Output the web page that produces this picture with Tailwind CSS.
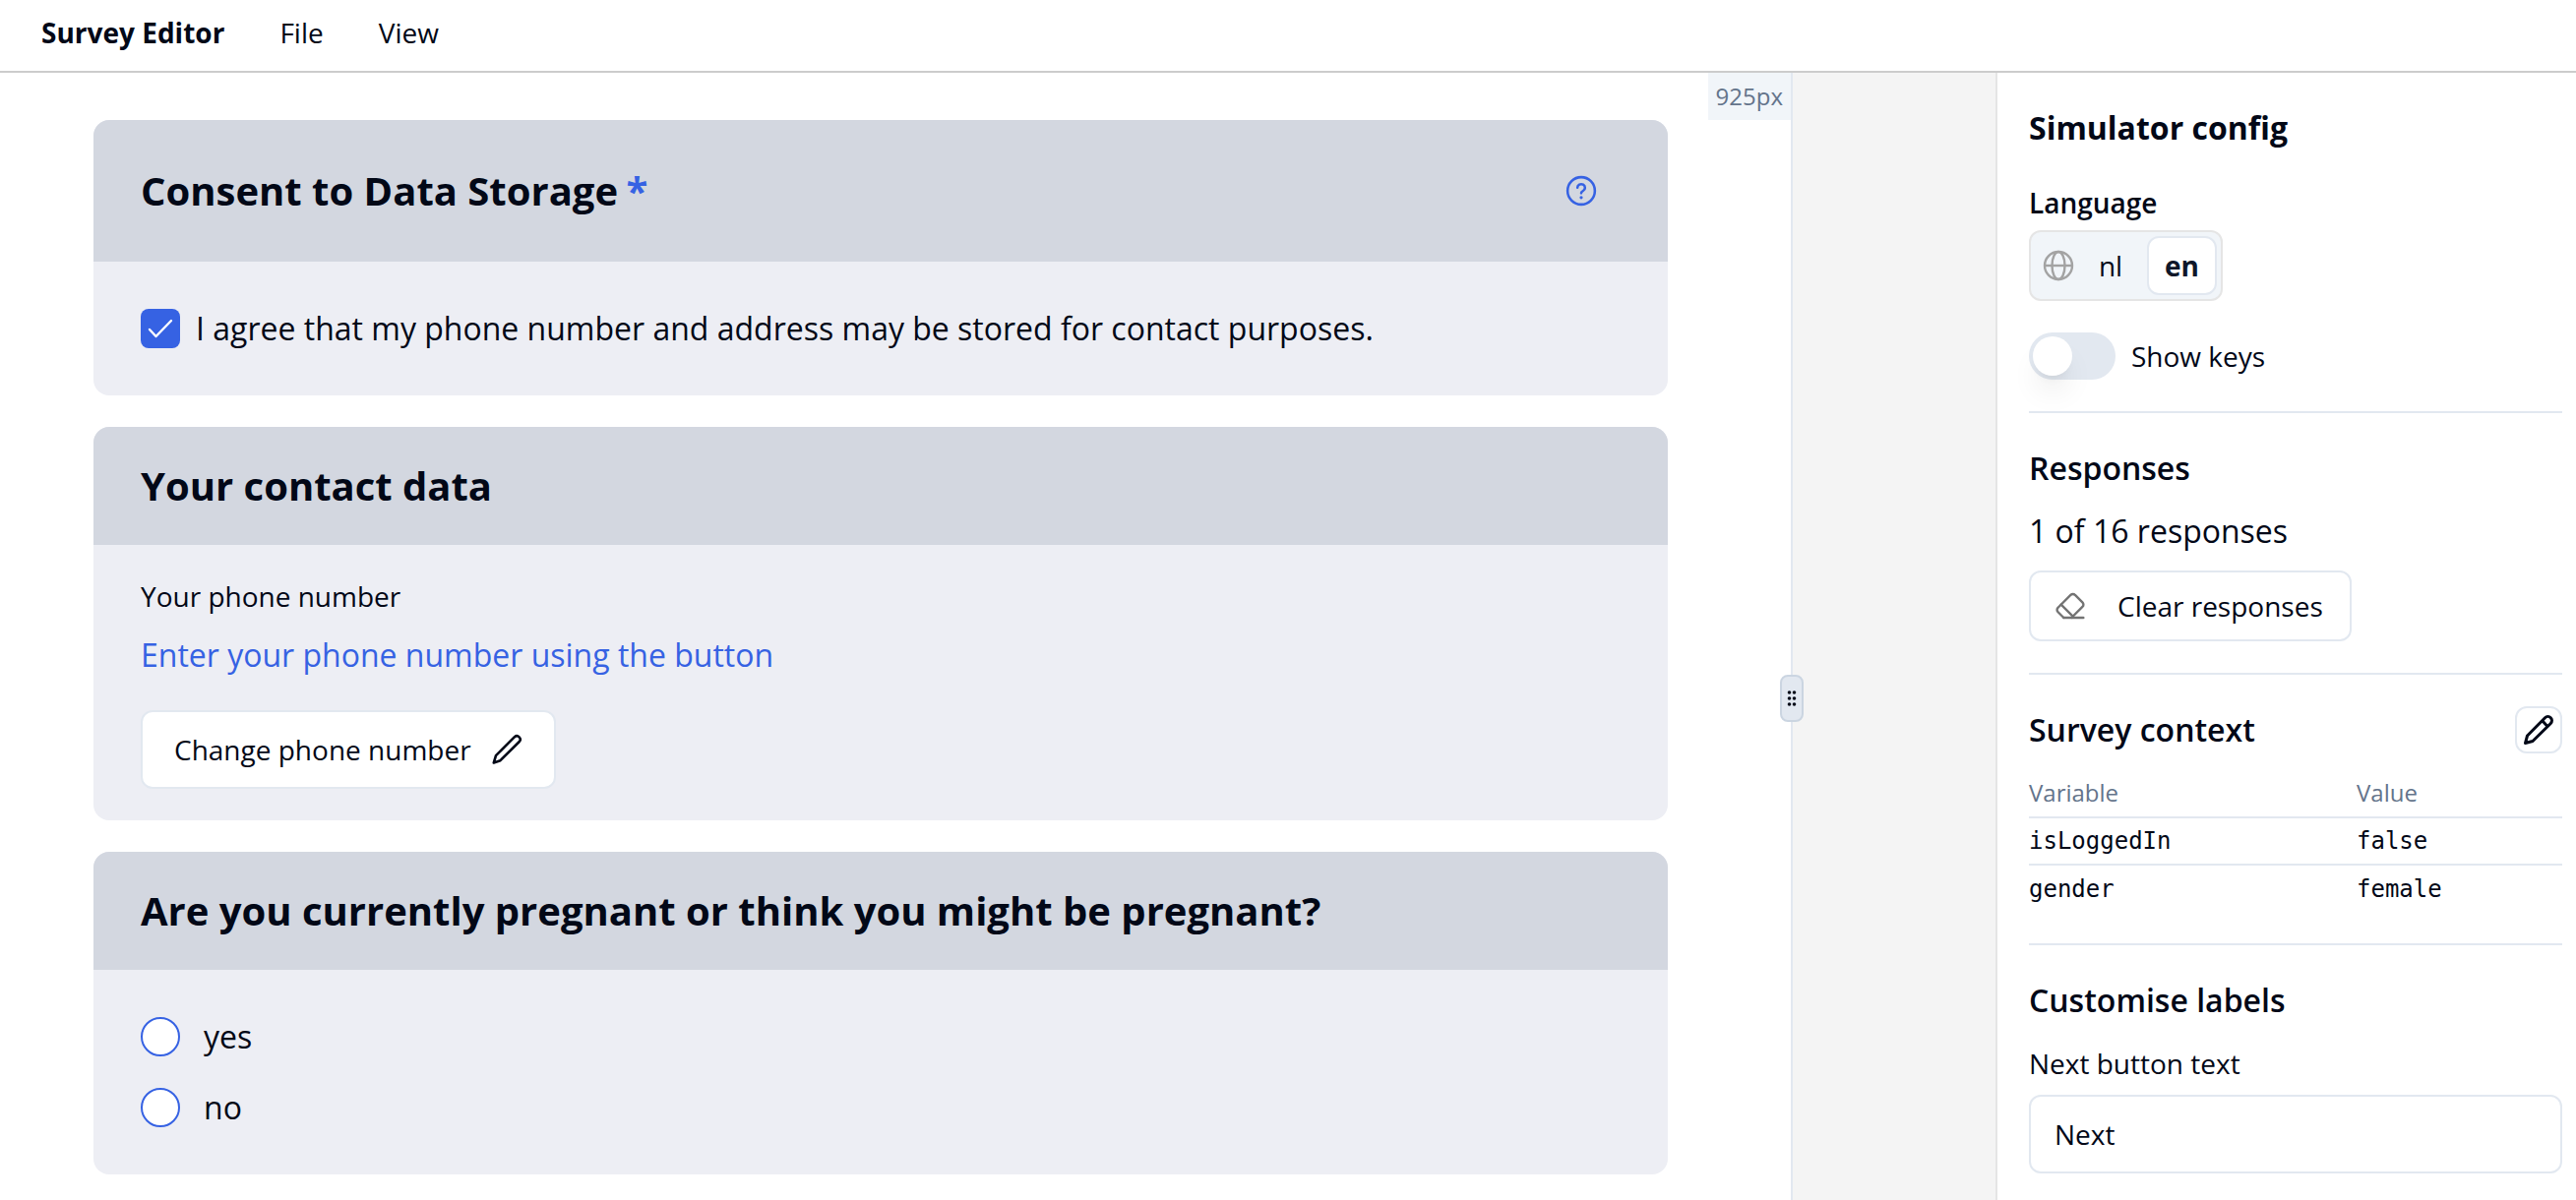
<!DOCTYPE html>
<html lang="en">
<head>
<meta charset="utf-8">
<title>Survey Editor</title>
<script src="https://cdn.jsdelivr.net/npm/@tailwindcss/browser@4"></script>
</head>
<body class="flex h-screen flex-col overflow-hidden bg-white font-['Open_Sans',sans-serif] text-[28px] leading-[40px] text-[#020817]">
<header class="flex h-[74px] shrink-0 items-center gap-14 border-b-2 border-[#cccccc] px-[42px] pb-1.5">
  <h1 class="font-bold">Survey Editor</h1>
  <nav class="flex gap-14 font-medium">
    <button type="button">File</button>
    <button type="button">View</button>
  </nav>
</header>

<div class="flex min-h-0 flex-1">
  <main class="relative min-w-0 flex-1 border-r-2 border-[#e2e8f0] pt-12 pr-[30px]">
    <div class="absolute top-0 right-0 bg-[#f1f5f9] px-2 py-1 text-2xl leading-[40px] text-[#64748b]">925px</div>
    <button type="button" aria-label="Resize preview" class="absolute top-[612px] -right-[13px] flex h-12 w-6 items-center justify-center rounded-lg border-2 border-[#cbd5e1] bg-[#e2e8f0]">
      <svg class="h-5 w-3" viewBox="0 0 12 20" fill="#020817"><circle cx="3.5" cy="4" r="1.8"/><circle cx="8.5" cy="4" r="1.8"/><circle cx="3.5" cy="10" r="1.8"/><circle cx="8.5" cy="10" r="1.8"/><circle cx="3.5" cy="16" r="1.8"/><circle cx="8.5" cy="16" r="1.8"/></svg>
    </button>

    <form class="mx-auto flex max-w-[1600px] flex-col gap-8 text-[32px] leading-[48px]">
      <section class="overflow-hidden rounded-2xl bg-[#edeef4]">
        <div class="flex h-36 items-center justify-between bg-[#d3d7e0] pr-[72px] pl-12">
          <h2 class="text-[40px] leading-[56px] font-bold">Consent to Data Storage <span class="-ml-0.5 text-[#3662e3]">*</span></h2>
          <button type="button" aria-label="Help">
            <svg class="size-8" viewBox="0 0 15 15" fill="none" stroke="#3662e3" stroke-width="1.200" stroke-linecap="round"><circle cx="7.5" cy="7.5" r="6.5"/><path d="M5.700 6a1.800 1.700 0 1 1 2.700 1.500c-.6.35-.9.600-.9 1.100"/><circle cx="7.500" cy="10.700" r=".75" fill="#3662e3" stroke="none"/></svg>
          </button>
        </div>
        <div class="px-12 py-11">
          <label class="flex items-center gap-4">
            <span class="grid size-10 shrink-0">
              <input type="checkbox" checked class="col-start-1 row-start-1 size-10 appearance-none rounded-lg bg-[#3662e3]">
              <svg class="pointer-events-none col-start-1 row-start-1 size-8 place-self-center" viewBox="0 0 32 32" fill="none" stroke="#fff" stroke-width="2.4" stroke-linecap="round" stroke-linejoin="round"><path d="M5 17l6.500 7L27 8"/></svg>
            </span>
            I agree that my phone number and address may be stored for contact purposes.
          </label>
        </div>
      </section>

      <section class="overflow-hidden rounded-2xl bg-[#edeef4]">
        <h2 class="bg-[#d3d7e0] px-12 py-8 text-[40px] leading-[56px] font-bold">Your contact data</h2>
        <div class="px-12 py-8">
          <p class="text-[28px] leading-[40px]">Your phone number</p>
          <p class="mt-4 text-[#3662e3]">Enter your phone number using the button</p>
          <button type="button" class="mt-8 flex h-20 w-[422px] items-center justify-between rounded-xl border-2 border-[#e2e8f0] bg-white px-8 text-[28px] leading-[40px] font-medium">Change phone number
            <svg class="size-8" viewBox="0 0 32 32" fill="none" stroke="#020817" stroke-width="2.600" stroke-linejoin="round" stroke-linecap="round"><path d="M24 3.200a3.400 3.400 0 0 1 4.800 4.800L9.500 27.200 2.800 29.500 5 22.200z"/></svg>
          </button>
        </div>
      </section>

      <section class="overflow-hidden rounded-2xl bg-[#edeef4]">
        <h2 class="bg-[#d3d7e0] px-12 py-8 text-[40px] leading-[56px] font-bold">Are you currently pregnant or think you might be pregnant?</h2>
        <div class="flex flex-col gap-6 px-12 py-11">
          <label class="flex items-center gap-6"><input type="radio" name="pregnant" class="size-10 appearance-none rounded-full border-2 border-[#3662e3] bg-white">yes</label>
          <label class="flex items-center gap-6"><input type="radio" name="pregnant" class="size-10 appearance-none rounded-full border-2 border-[#3662e3] bg-white">no</label>
        </div>
      </section>
    </form>
  </main>

  <div class="w-[206px] shrink-0 bg-[#f4f4f4]"></div>

  <aside class="w-[590px] shrink-0 border-l-2 border-[#e5e5e5] py-8 pr-[14px] pl-8">
    <section class="border-b-2 border-[#e2e8f0] pb-8">
      <h2 class="text-[32px] leading-[48px] font-bold">Simulator config</h2>
      <h3 class="mt-8 font-semibold">Language</h3>
      <div class="mt-2 flex h-[72px] w-fit items-center rounded-xl border-2 border-[#e5e5e5] bg-[#f1f5f9] pr-1 pl-3" role="group" aria-label="Language">
        <svg class="size-8" viewBox="0 0 32 32" fill="none" stroke="#a3a3a3" stroke-width="2.400"><circle cx="16" cy="16" r="14"/><ellipse cx="16" cy="16" rx="6.500" ry="14"/><path d="M2 16h28"/></svg>
        <button type="button" class="w-[74px]">nl</button>
        <button type="button" class="h-[60px] rounded-xl border-2 border-[#e2e8f0] bg-white px-4 font-bold text-[#0f172a]">en</button>
      </div>
      <label class="mt-8 flex items-center gap-4 font-medium">
        <input type="checkbox" role="switch" class="flex h-12 w-[88px] appearance-none items-center rounded-full bg-[#e2e8f0] px-1 before:size-10 before:rounded-full before:bg-white before:shadow-[0_20px_30px_-6px_rgba(0,0,0,0.1),0_8px_12px_-8px_rgba(0,0,0,0.1)] before:content-['']">
        Show keys
      </label>
    </section>

    <section class="border-b-2 border-[#e2e8f0] py-8">
      <h2 class="text-[32px] leading-[48px] font-semibold">Responses</h2>
      <p class="mt-4 text-[32px] leading-[48px]">1 of 16 responses</p>
      <button type="button" class="mt-4 flex h-[72px] w-[328px] items-center gap-8 rounded-xl border-2 border-[#e2e8f0] px-6 font-medium">
        <svg class="size-8" viewBox="0 0 24 24" fill="none" stroke="#737373" stroke-width="1.800" stroke-linecap="round" stroke-linejoin="round"><path d="m7 21-4.300-4.300c-1-1-1-2.500 0-3.400l9.600-9.600c1-1 2.500-1 3.400 0l5.600 5.600c1 1 1 2.500 0 3.400L13 21"/><path d="M22 21H7"/><path d="m5 11 9 9"/></svg>
        Clear responses
      </button>
    </section>

    <section class="border-b-2 border-[#e2e8f0] py-8">
      <div class="flex items-center justify-between">
        <h2 class="text-[32px] leading-[48px] font-semibold">Survey context</h2>
        <button type="button" aria-label="Edit survey context" class="flex size-12 items-center justify-center rounded-xl border-2 border-[#e2e8f0]">
          <svg class="size-8" viewBox="0 0 32 32" fill="none" stroke="#020817" stroke-width="3" stroke-linejoin="round" stroke-linecap="round"><path d="M22.500 3.700a3.900 3.900 0 0 1 5.800 5.800L10 27.500 2.500 29.500 4.500 22zM20 7l5 5.500"/></svg>
        </button>
      </div>
      <table class="mt-5 w-full table-fixed text-left text-2xl leading-[40px]">
        <thead><tr class="border-b-2 border-[#e2e8f0] text-[#64748b]"><th class="w-[333px] pb-1 font-medium">Variable</th><th class="pb-1 font-medium">Value</th></tr></thead>
        <tbody class="font-['DejaVu_Sans_Mono',monospace]">
          <tr class="h-12 border-b-2 border-[#e2e8f0]"><td>isLoggedIn</td><td>false</td></tr>
          <tr class="h-12"><td>gender</td><td>female</td></tr>
        </tbody>
      </table>
    </section>

    <section class="pt-8">
      <h2 class="text-[32px] leading-[48px] font-semibold">Customise labels</h2>
      <label for="next-text" class="mt-5 block font-medium">Next button text</label>
      <input id="next-text" type="text" value="Next" class="mt-3 h-20 w-full rounded-xl border-2 border-[#e2e8f0] px-6">
    </section>
  </aside>
</div>
</body>
</html>
